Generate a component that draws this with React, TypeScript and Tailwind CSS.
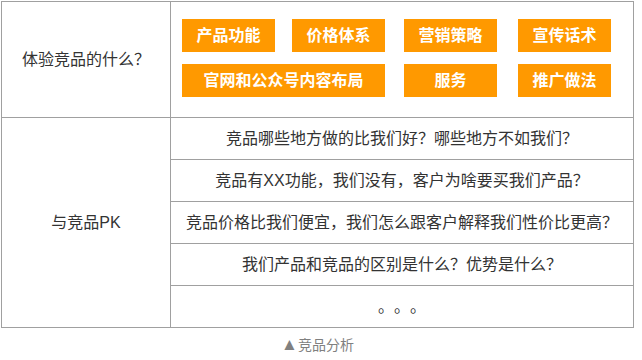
const font = "font-['Liberation_Sans','Noto_Sans_CJK_SC',sans-serif]";

const tagRows = [
  [
    { label: "产品功能", cls: "w-[93px]" },
    { label: "价格体系", cls: "w-[93px] ml-[17px]" },
    { label: "营销策略", cls: "w-[93px] ml-[19px]" },
    { label: "宣传话术", cls: "w-[93px] ml-[21px]" },
  ],
  [
    { label: "官网和公众号内容布局", cls: "w-[203px]" },
    { label: "服务", cls: "w-[93px] ml-[19px]" },
    { label: "推广做法", cls: "w-[93px] ml-[21px]" },
  ],
];

const questions = [
  "竞品哪些地方做的比我们好？哪些地方不如我们？",
  "竞品有XX功能，我们没有，客户为啥要买我们产品？",
  "竞品价格比我们便宜，我们怎么跟客户解释我们性价比更高？",
  "我们产品和竞品的区别是什么？优势是什么？",
  "。。。",
];

export default function App() {
  return (
    <div
      lang="zh-CN"
      className={`w-[642px] h-[360px] bg-white [text-spacing-trim:space-all] ${font}`}
    >
      <div className="ml-[1px] mt-[1px] w-[633px] border border-[#a0a0a0]">
        {/* row 1 */}
        <div className="flex h-[116px] border-b border-[#a0a0a0]">
          <div className="flex w-[169px] items-center justify-center border-r border-[#a0a0a0] text-[16px] text-[#333]">
            体验竞品的什么？
          </div>
          <div className="flex flex-1 flex-col gap-[12px] pl-[11px] pt-[17px]">
            {tagRows.map((row, r) => (
              <div key={r} className="flex">
                {row.map((t) => (
                  <div
                    key={t.label}
                    className={`flex h-[33px] items-center justify-center bg-[#ff9900] text-[16px] font-bold text-white ${t.cls}`}
                  >
                    {t.label}
                  </div>
                ))}
              </div>
            ))}
          </div>
        </div>

        {/* row 2 */}
        <div className="flex">
          <div className="flex w-[169px] items-center justify-center border-r border-[#a0a0a0] text-[16px] text-[#333]">
            与竞品PK
          </div>
          <div className="flex-1">
            {questions.map((q, i) => (
              <div
                key={i}
                className={`flex items-center justify-center text-[16px] text-[#333] ${
                  i < questions.length - 1
                    ? "h-[42px] border-b border-[#a0a0a0]"
                    : "h-[41px]"
                }`}
              >
                {q}
              </div>
            ))}
          </div>
        </div>
      </div>

      <p className="mt-[7px] flex w-[635px] items-center justify-center text-[14px] leading-[20px] text-[#808080]">
        <span className="text-[17px] leading-[20px]">▲</span>
        <span>竞品分析</span>
      </p>
    </div>
  );
}
